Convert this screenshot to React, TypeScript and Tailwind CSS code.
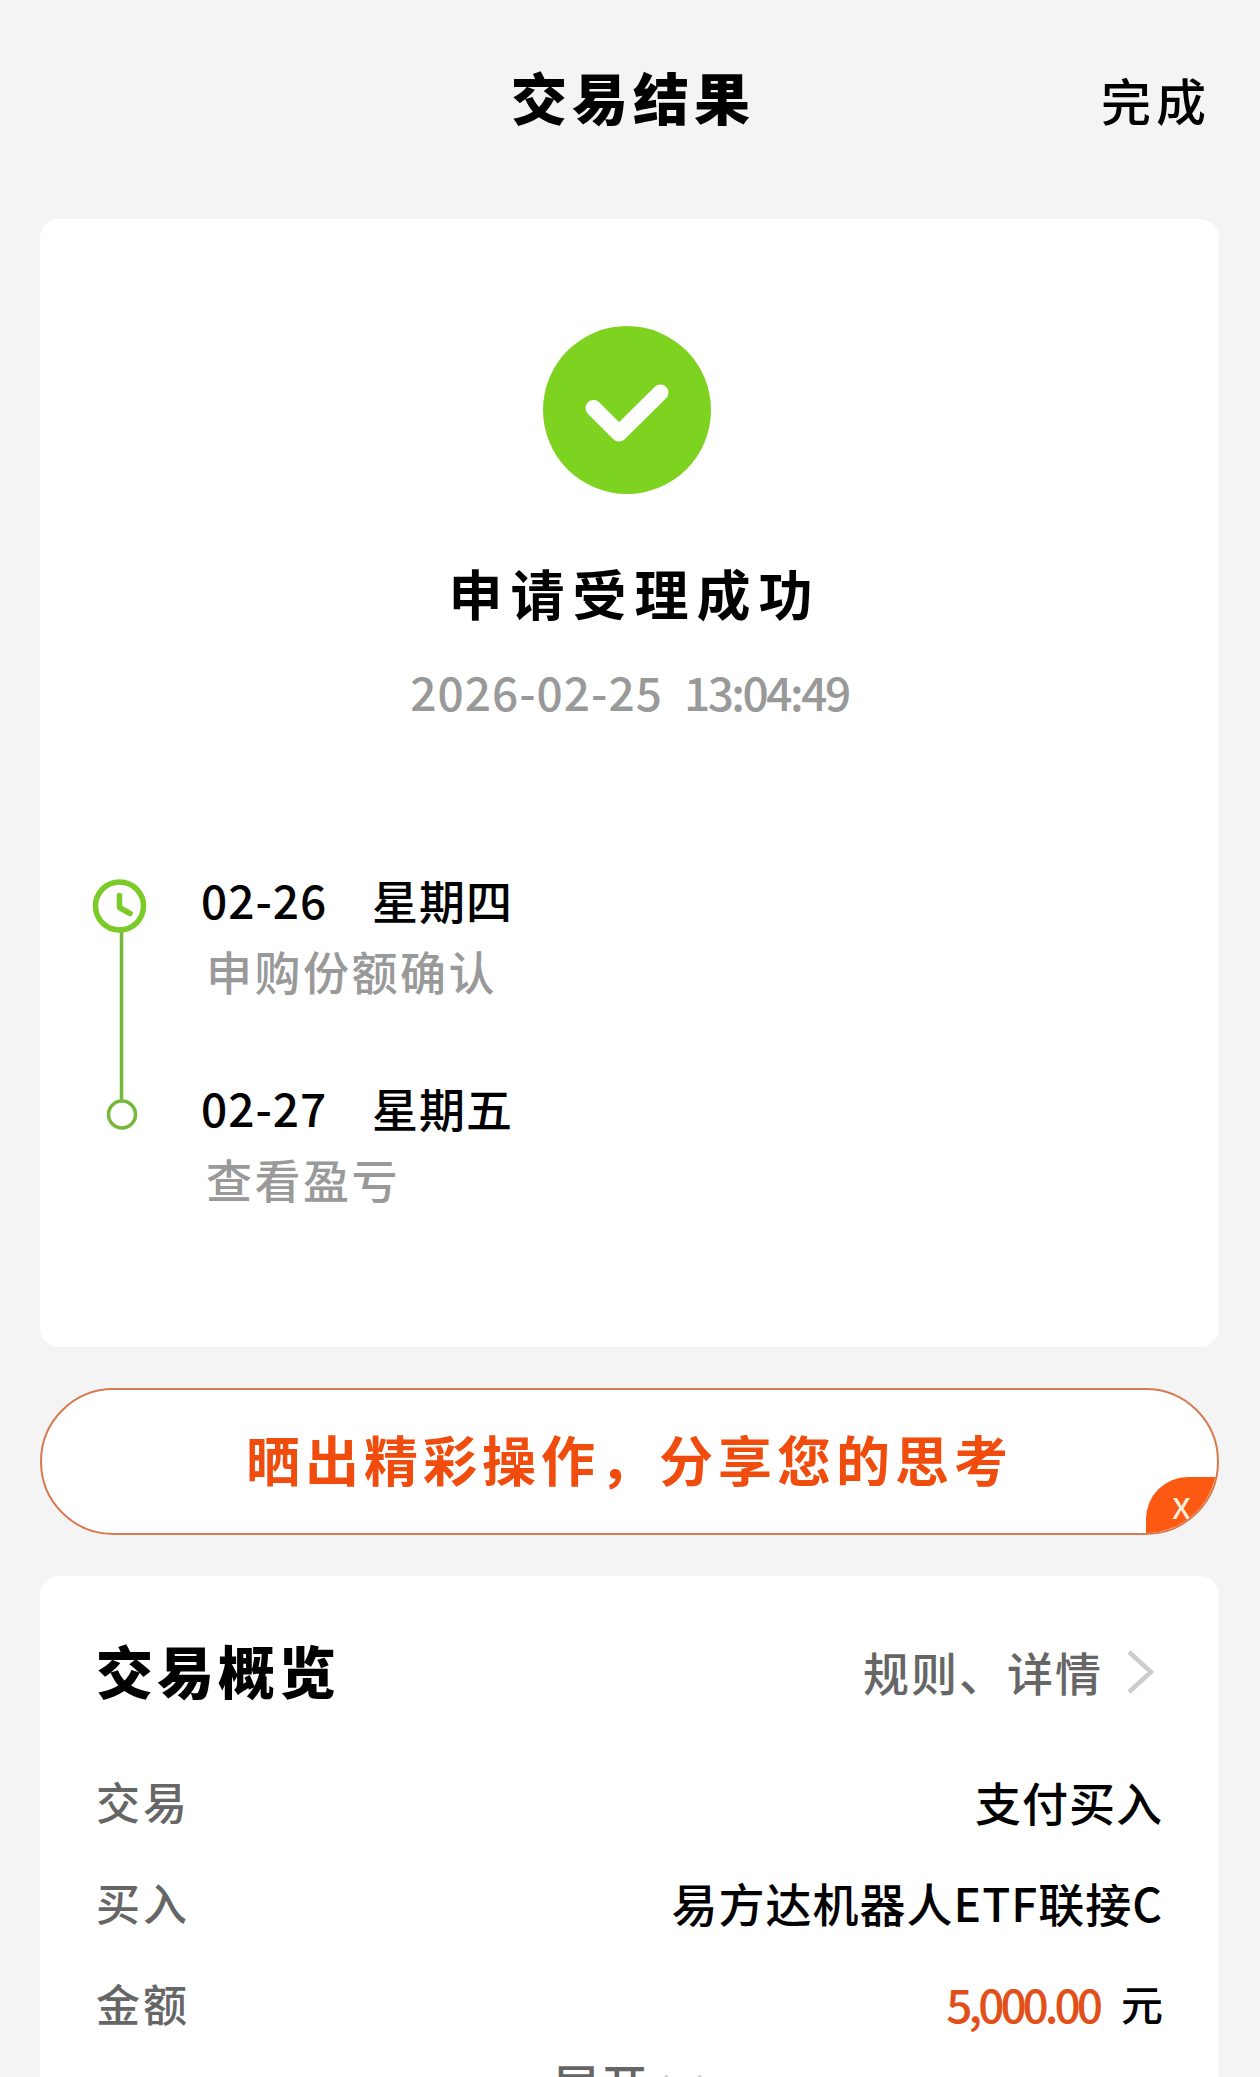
import type { ReactNode } from "react";

interface Step {
  date: string;
  weekday: string;
  label: string;
}

const steps: Step[] = [
  { date: "02-26", weekday: "星期四", label: "申购份额确认" },
  { date: "02-27", weekday: "星期五", label: "查看盈亏" },
];

function SuccessIcon() {
  return (
    <svg className="mr-[5px] h-[168px] w-[168px]" viewBox="0 0 168 168" fill="none">
      <circle cx="84" cy="84" r="84" fill="#7ed321" />
      <path
        d="M50.5 82 76 107.500 117.500 66.500"
        stroke="#fff"
        strokeWidth="16"
        strokeLinecap="round"
        strokeLinejoin="round"
      />
    </svg>
  );
}

function TimelineRail() {
  return (
    <svg className="mt-[3px] h-[252px] w-[56px] shrink-0" viewBox="0 0 56 252" fill="none">
      <circle cx="28.500" cy="27" r="24" stroke="#7aca28" strokeWidth="5.500" />
      <path
        d="M28.500 16.500V28.500L39 34.500"
        stroke="#7aca28"
        strokeWidth="5.500"
        strokeLinecap="round"
        strokeLinejoin="round"
      />
      <path d="M30.500 53V221" stroke="#76b83c" strokeWidth="3.500" />
      <circle cx="31" cy="235.500" r="13.500" stroke="#76b83c" strokeWidth="3.500" />
    </svg>
  );
}

function ChevronRight() {
  return (
    <svg className="h-[44px] w-[28px]" viewBox="0 0 28 44" fill="none">
      <path d="M2 2 24 22 2 42" stroke="#ccc" strokeWidth="4.500" />
    </svg>
  );
}

function OverviewRow({ label, children }: { label: string; children: ReactNode }) {
  return (
    <div className="flex h-[101px] items-center justify-between">
      <span className="text-[44px] tracking-[3px] text-[#666]">{label}</span>
      <span className="flex items-center">{children}</span>
    </div>
  );
}

export default function App() {
  return (
    <div className="flex h-[2077px] w-[1260px] flex-col overflow-hidden bg-[#f4f4f4] px-10 font-['Noto_Sans_CJK_SC',sans-serif] text-[46px] leading-none font-medium text-black">
      <header className="grid h-[219px] shrink-0 grid-cols-3 items-start">
        <div />
        <h1 className="mt-[68px] pl-[6px] text-center text-[56px] font-black tracking-[5px] whitespace-nowrap">
          交易结果
        </h1>
        <button className="mt-[74px] mr-[9px] justify-self-end text-[50px] leading-none tracking-[5px]">
          完成
        </button>
      </header>

      <section className="flex h-[1128px] w-[1179px] shrink-0 flex-col items-center rounded-[19px] bg-white pt-[107px]">
        <SuccessIcon />
        <h2 className="mt-[72px] pl-[10px] text-[54px] font-bold tracking-[8px]">申请受理成功</h2>
        <p className="mt-[48px] flex gap-[21px] text-[#999]">
          <span className="tracking-[1px]">2026-02-25</span>
          <span className="tracking-[-2.500px]">13:04:49</span>
        </p>

        <div className="mt-[162px] flex w-full pl-[51px]">
          <TimelineRail />
          <div className="ml-[54px] flex flex-col gap-[90px]">
            {steps.map((step) => (
              <div key={step.date} className="flex h-[118px] flex-col">
                <div className="flex">
                  <span className="w-[171px] tracking-[1px]">{step.date}</span>
                  <span className="tracking-[1px]">{step.weekday}</span>
                </div>
                <div className="mt-[25px] ml-[5px] tracking-[2.500px] text-[#999]">{step.label}</div>
              </div>
            ))}
          </div>
        </div>
      </section>

      <div className="relative mt-[41px] flex h-[147px] w-[1179px] shrink-0 items-center justify-center overflow-hidden rounded-full border-2 border-[#d87a50] bg-white text-[54px] font-bold tracking-[5px] text-[#ef4c0d]">
        <span className="pb-[6px]">晒出精彩操作，分享您的思考</span>
        <button className="absolute right-0 bottom-0 flex h-[56px] w-[71px] items-center justify-center rounded-tl-[42px] bg-[#fc5a12] pb-1 text-[38px] leading-none font-normal tracking-normal text-[#fff0dc]">
          x
        </button>
      </div>

      <section className="mt-[41px] flex h-[560px] w-[1179px] shrink-0 flex-col rounded-t-[19px] bg-white px-[56px]">
        <div className="mt-[56px] flex h-[80px] items-center justify-between">
          <h2 className="pb-[6px] text-[57px] font-black tracking-[4px]">交易概览</h2>
          <button className="mr-[8px] flex items-center text-[46px] leading-none tracking-[2px] text-[#666]">
            <span className="mr-[24px] pb-[3px]">规则、详情</span>
            <ChevronRight />
          </button>
        </div>
        <div className="mt-[38px] flex flex-col">
          <OverviewRow label="交易">
            <span className="tracking-[1px]">支付买入</span>
          </OverviewRow>
          <OverviewRow label="买入">
            <span className="tracking-[1px]">易方达机器人ETF联接C</span>
          </OverviewRow>
          <OverviewRow label="金额">
            <span className="mr-[22px] tracking-[-4px] text-[#e2501a]">5,000.00</span>
            <span className="text-[42px]">元</span>
          </OverviewRow>
        </div>
        <div className="mt-[7px] flex justify-center gap-3 pr-[4px] text-[#666]">
          <span className="tracking-[3px]">展开</span>
          <svg className="mt-[14px] h-[24px] w-[40px]" viewBox="0 0 40 24" fill="none">
            <path d="M2 2 20 20 38 2" stroke="#ccc" strokeWidth="4" />
          </svg>
        </div>
      </section>
    </div>
  );
}
